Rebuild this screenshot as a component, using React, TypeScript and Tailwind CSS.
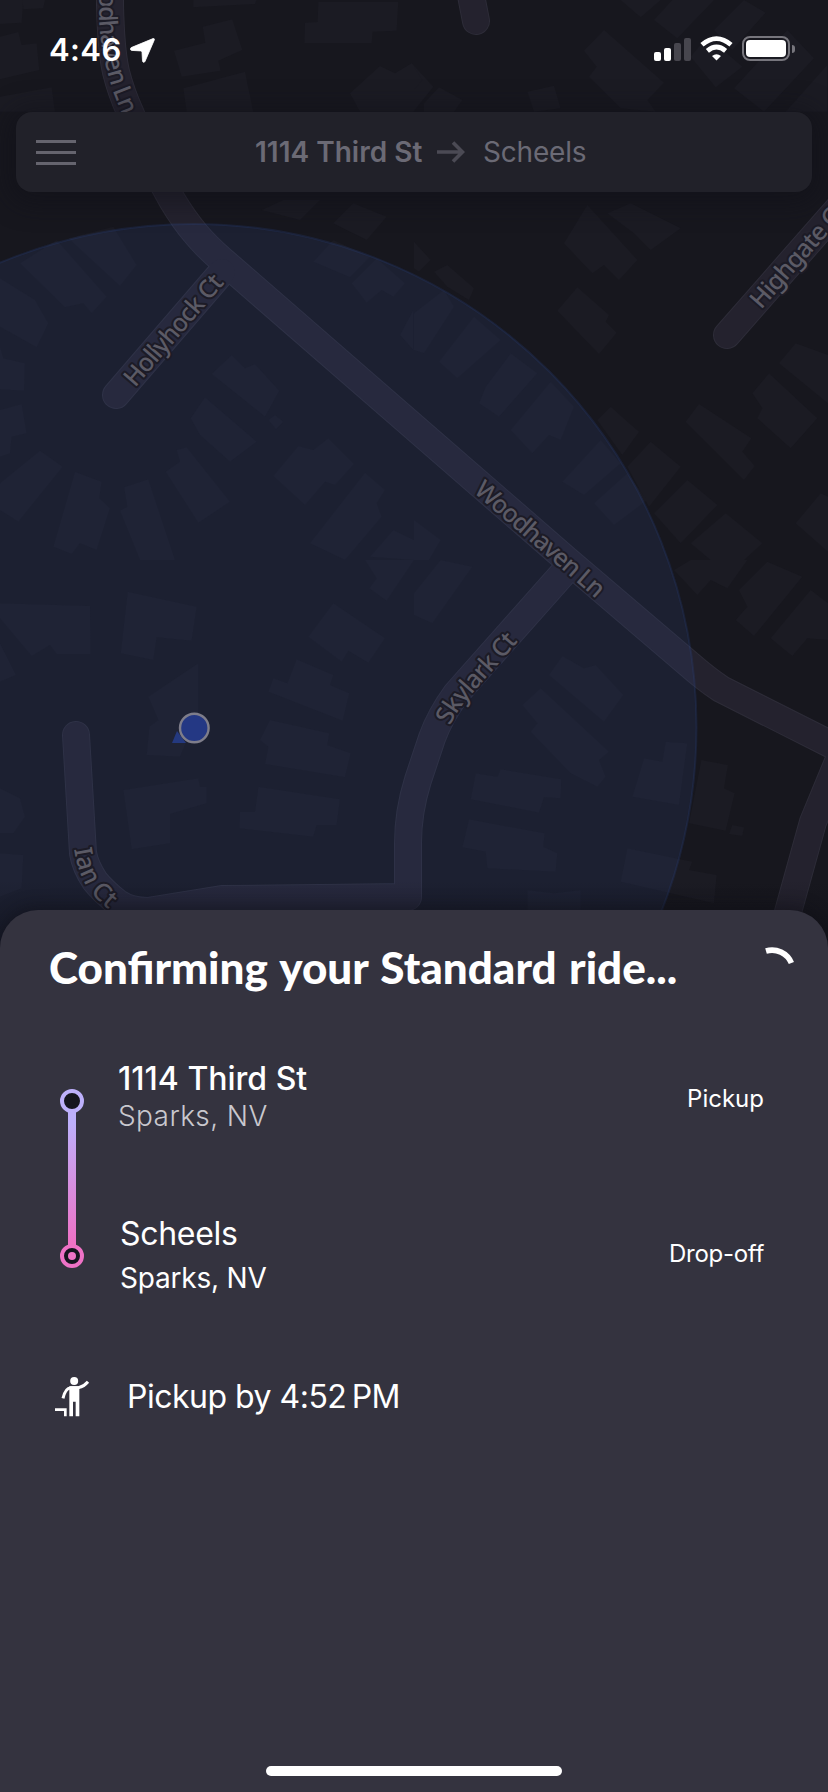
import React from "react";

const ROADS = [
  "M110 -20 L110 5 Q111 50 116 72 Q121 92 130 112 L150 160 L172 200 Q184 220 196 234 Q206 246 222 260 L414 427 L567 560 L690 665 Q706 679 721 689 L828 743 L860 759",
  "M116 395 L222 272",
  "M727 335 L828 220 L860 184",
  "M468 -20 L476 21",
  "M566 570 L456 694 Q440 716 432 738 L418 780 Q408 812 408 843 L408 897 L222 899 L148 911 Q130 911 118 903 Q103 891 95 881 Q85 866 83 853 L76 735",
  "M842 752 L813 822 L788 912 L780 945",
];

type Block = { origin: [number, number]; shapes: string[] };

const BUILDINGS: Block[] = [
  {
    origin: [0, 0],
    shapes: [
      "0,0 70,0 65,68 0,72",
      "68,0 135,0 130,25 70,28",
      "0,110 55,96 65,135 110,130 118,210 0,238",
      "0,290 155,262 165,335 0,335",
      "580,0 770,0 765,12 580,22",
      "955,5 1195,5 1190,92 1118,95 1115,130 913,130 915,68 953,66",
      "522,152 616,128 608,80 697,58 727,150 655,182 662,212 545,230",
      "550,265 735,215 760,335 560,335",
      "1050,280 1140,198 1185,220 1235,190 1300,260 1240,335 1080,335",
    ],
  },
  {
    origin: [414, 0],
    shapes: [
      "620,0 740,0 680,52",
      "720,60 775,0 900,0 790,115",
      "900,90 990,0 1055,38 955,150",
      "510,152 570,90 750,248 700,300 725,335 620,325 525,230 548,200",
      "830,170 880,110 985,200 905,262",
      "960,265 1120,90 1200,175 1050,335",
      "1115,335 1240,195 1240,335",
      "340,275 420,257 440,325 360,335",
      "30,310 75,262 145,300 120,335 30,335",
      "0,200 25,240 0,270",
    ],
  },
  {
    origin: [0, 200],
    shapes: [
      "60,190 170,120 320,290 275,340 250,310 195,322",
      "205,115 340,80 410,195 360,258",
      "0,235 105,300 145,370 110,442 0,380",
      "0,440 10,475 75,490 72,572 0,568",
      "0,630 65,612 80,700 35,710 30,760 0,770",
      "0,850 120,752 188,800 55,965 0,930",
      "225,815 305,845 298,895 330,925 290,1050 240,1030 215,1062 160,1040",
      "372,862 445,838 525,1080 420,1080 360,932 382,920",
      "635,522 695,465 735,505 765,492 838,572 795,650",
      "572,655 615,592 770,725 690,785 600,705",
      "805,660 825,645 850,665 828,688",
      "497,815 540,785 530,750 560,742 690,905 595,968",
      "820,828 895,738 940,750 985,715 1062,792 1005,855 975,845 915,915",
      "930,1030 1095,818 1155,870 1130,910 1145,950 1035,1080",
      "940,185 1000,120 1110,170 1050,232",
      "1055,250 1130,175 1215,250 1180,290 1145,270 1100,308",
      "1200,405 1240,330 1240,450",
      "785,30 850,0 960,0 900,60",
      "1000,70 1060,10 1160,50 1100,120",
      "1110,1070 1180,990 1242,1020 1242,1080",
    ],
  },
  {
    origin: [414, 200],
    shapes: [
      "450,130 520,15 670,180 615,240 570,195 535,220",
      "580,40 650,10 800,85 710,150 660,100",
      "0,125 50,180 15,215 0,205",
      "60,215 100,195 180,265 165,300 100,260",
      "430,332 490,262 585,345 575,365 608,398 555,462",
      "75,485 180,350 260,420 130,535",
      "195,610 215,560 290,460 370,520 255,650",
      "290,690 410,545 480,620 440,720 405,705 355,760",
      "550,660 590,620 640,665 675,695 625,765",
      "640,800 710,725 800,800 705,920",
      "445,845 560,720 620,790 510,885",
      "540,910 640,820 700,900 600,975",
      "720,940 820,840 910,915 800,1030",
      "815,665 855,612 1012,715 985,755 1022,798 990,840",
      "1015,580 1065,520 1210,655 1130,745 1030,655 1045,625",
      "1095,490 1145,430 1242,465 1242,610",
      "830,1030 935,940 1045,1030 990,1080 890,1080",
      "1145,970 1220,880 1242,890 1242,1055",
      "0,340 90,270 120,320 30,460 0,450",
      "0,960 80,1020 45,1080 0,1080",
    ],
  },
  {
    origin: [0, 560],
    shapes: [
      "0,130 270,138 272,282 170,282 150,255 95,288 0,175",
      "0,250 48,345 0,365",
      "383,95 590,140 575,242 470,232 460,300 362,280",
      "445,410 595,310 595,460 540,590 440,585 448,500 475,480",
      "1000,130 1155,235 1105,308 1045,272 1025,305 925,230",
      "890,298 1000,345 990,375 1048,400 1028,482 805,395 820,355 862,370",
      "810,480 988,520 982,555 1052,580 1035,652 795,612 805,560 780,540",
      "775,680 1020,718 1010,795 950,795 940,830 718,805 720,755 765,755",
      "370,690 595,655 600,680 620,680 620,730 510,762 510,850 395,868",
      "0,685 60,715 75,770 40,820 0,820",
      "0,880 70,885 65,985 0,1010",
      "1095,0 1242,0 1160,122 1108,85 1130,55",
    ],
  },
  {
    origin: [414, 560],
    shapes: [
      "0,100 80,0 175,20 55,190 0,165",
      "405,345 445,288 510,325 545,315 628,405 570,485",
      "325,435 380,385 585,575 555,600 575,650 550,680 470,640 350,515 370,490",
      "185,640 250,650 260,628 442,658 440,715 390,712 375,758 170,718",
      "165,778 392,820 388,860 430,880 425,935 220,925 215,875 145,862",
      "690,595 745,605 755,545 820,550 795,735 655,710",
      "862,600 942,615 930,685 962,700 935,812 825,790",
      "955,795 990,802 985,828 945,822",
      "640,865 835,905 825,930 908,945 900,1030 620,965",
      "780,30 830,0 1000,0 940,85 890,60 850,105",
      "975,90 1060,5 1165,50 1020,228 965,180 1000,140",
      "1070,235 1190,90 1242,130 1242,240 1180,235 1135,288",
      "340,990 420,1000 500,990 500,1050 340,1050",
    ],
  },
];

function MapCanvas() {
  return (
    <svg className="absolute inset-0" width="828" height="960" viewBox="0 0 828 960" aria-hidden="true">
      <defs>
        <path id="lbl-woodhaven-top" d="M99 -43 L99 20 Q101 50 106 66 Q110 84 116 99 L130 134" />
        <path id="lbl-ian" d="M74 849 Q77 871 88 889 Q98 903 126 922" />
        <path id="lbl-skylark" d="M450 726 Q458 709 470 696 L530 628" />
        <linearGradient id="sheet-shade" x1="0" x2="0" y1="0" y2="1">
          <stop offset="0" stopColor="#0d0d14" stopOpacity="0" />
          <stop offset="1" stopColor="#0d0d14" stopOpacity="0.5" />
        </linearGradient>
      </defs>
      <rect width="828" height="960" fill="#17171e" />
      {BUILDINGS.map((b, i) => (
        <g key={i} transform={`translate(${b.origin[0]} ${b.origin[1]}) scale(0.33333)`} fill="#1b1b23">
          {b.shapes.map((s) => (
            <polygon key={s} points={s} />
          ))}
        </g>
      ))}
      <g fill="none" strokeLinecap="round" strokeLinejoin="round">
        {ROADS.map((d) => (
          <path key={d} d={d} stroke="#2d2c38" strokeWidth="28" />
        ))}
        {ROADS.map((d) => (
          <path key={d} d={d} stroke="#24222e" strokeWidth="26" />
        ))}
      </g>
      <circle cx="193.5" cy="727" r="503" fill="#3a5198" fillOpacity="0.16" stroke="#2f4a94" strokeOpacity="0.2" strokeWidth="2" />
      <g
        fill="#5b5a65"
        stroke="#1c1b26"
        strokeWidth="4"
        strokeLinejoin="round"
        paintOrder="stroke"
        fontFamily="'Noto Sans', sans-serif"
        fontWeight="500"
        fontSize="25"
      >
        <text textLength="162">
          <textPath href="#lbl-woodhaven-top">Woodhaven Ln</textPath>
        </text>
        <text transform="translate(135 388) rotate(-49.5)" textLength="138">Hollyhock Ct</text>
        <text transform="translate(473 492) rotate(41)" textLength="163">Woodhaven Ln</text>
        <text textLength="109">
          <textPath href="#lbl-skylark">Skylark Ct</textPath>
        </text>
        <text transform="translate(761 310) rotate(-48.7)" textLength="132">Highgate Ct</text>
        <text textLength="72">
          <textPath href="#lbl-ian">Ian Ct</textPath>
        </text>
      </g>
      <path d="M172 743 L177 731 L186 743 Z" fill="#24397f" />
      <circle cx="194.3" cy="728" r="14.3" fill="#243884" stroke="#7e7d8a" strokeWidth="2.4" />
      <rect y="880" width="828" height="80" fill="url(#sheet-shade)" />
    </svg>
  );
}

function StatusBar() {
  return (
    <div className="flex h-[112px] items-start pl-[49px] pr-[33px] pt-[34px]">
      <span className="w-[73px] whitespace-nowrap font-['Inter',sans-serif] text-[31px] font-semibold leading-[32px] tracking-[0.4px] text-white">
        4:46
      </span>
      <svg className="ml-[8px] mt-[4px]" width="25" height="25" viewBox="0 0 25 25" fill="#fff" stroke="#fff" strokeWidth="0.8">
        <path d="M23 0.6 L1.2 9.6 C0 10.3 0.2 12.2 1.6 12.4 L10.6 12.9 C11.5 13 11.9 13.4 12 14.2 L12.5 22.8 C12.6 24.5 14.2 24.8 15 23.4 L24.2 2.2 C24.7 1 24.2 0.2 23 0.6 Z" />
      </svg>
      <div className="ml-auto flex items-end">
        <div className="mt-[4px] flex h-[23px] items-end gap-[3px]">
          <div className="h-[9px] w-[7px] rounded-[2px] bg-white" />
          <div className="h-[13px] w-[7px] rounded-[2px] bg-white" />
          <div className="h-[18px] w-[7px] rounded-[2px] bg-[#47464e]" />
          <div className="h-[23px] w-[7px] rounded-[2px] bg-[#47464e]" />
        </div>
        <svg className="ml-[9px]" width="33" height="25" viewBox="0 0 33 25" fill="none" stroke="#fff">
          <path d="M2 8.8 Q9 2.6 16.5 2.6 T31 8.8" strokeWidth="4.8" />
          <path d="M7.4 14.8 Q12 11 16.5 11 T25.6 14.8" strokeWidth="4.8" />
          <path d="M12 20 Q16.5 16.4 21 20 L16.5 24.4 Z" fill="#fff" stroke="none" />
        </svg>
        <div className="ml-[9px] flex items-center">
          <div className="h-[25px] w-[48px] rounded-[8px] border-2 border-[#77767d] p-[2px]">
            <div className="h-full w-full rounded-[4px] bg-white" />
          </div>
          <div className="ml-[2px] h-[8px] w-[3px] rounded-r-full bg-[#77767d]" />
        </div>
      </div>
    </div>
  );
}

function TripBar() {
  return (
    <div className="mx-[16px] flex h-[80px] items-center rounded-[16px] bg-[#212129] pl-[20px] shadow-[0_4px_24px_8px_rgba(16,15,24,0.5)]">
      <div className="flex w-[40px] flex-col gap-[8px]">
        <div className="h-[3px] bg-[#65646e]" />
        <div className="h-[3px] bg-[#65646e]" />
        <div className="h-[3px] bg-[#65646e]" />
      </div>
      <div className="ml-[179px] flex items-center font-['Inter',sans-serif] text-[28px] leading-[36px] text-[#6b6a75]">
        <span className="w-[167px] whitespace-nowrap font-semibold">1114 Third St</span>
        <svg className="ml-[15px]" width="28" height="22" viewBox="0 0 28 22" fill="none" stroke="#4b4a54" strokeWidth="3.6">
          <path d="M0 11 H26 M16 1.5 L25.5 11 L16 20.5" />
        </svg>
        <span className="ml-[18px] tracking-[-0.2px]">Scheels</span>
      </div>
    </div>
  );
}

function RouteLine() {
  return (
    <svg className="mt-[31px]" width="24" height="180" viewBox="0 0 24 180">
      <defs>
        <linearGradient id="route" x1="0" x2="0" y1="0" y2="1">
          <stop offset="0.1" stopColor="#bdb0fb" />
          <stop offset="0.95" stopColor="#ee72c6" />
        </linearGradient>
      </defs>
      <rect x="8" y="20" width="8" height="140" fill="url(#route)" />
      <circle cx="12" cy="12" r="10" fill="#15151f" stroke="#bdb0fb" strokeWidth="4" />
      <circle cx="12" cy="167" r="10" fill="#15151f" stroke="#ee72c6" strokeWidth="4" />
      <circle cx="12" cy="167" r="4" fill="#ee72c6" />
    </svg>
  );
}

function Hailing() {
  return (
    <svg width="36" height="41" viewBox="162 712 108 123" fill="none" stroke="#fff">
      <circle cx="222.5" cy="727" r="12" fill="#fff" stroke="none" />
      <path d="M189 779 Q196 748 212 747 L236 747 Q252 743 264 729" strokeWidth="9" />
      <path d="M208 743 H238 V833 H227 V789 H219 V833 H208 Z" fill="#fff" stroke="none" />
      <path d="M165 813 H196 V833" strokeWidth="8" />
    </svg>
  );
}

function Sheet() {
  return (
    <section className="flex flex-1 flex-col rounded-t-[38px] bg-[#34333f] font-['Inter',sans-serif] text-white shadow-[0_-4px_16px_rgba(13,13,20,0.45)]">
      <div className="flex h-[84px] items-start pl-[49px] pr-[32px] pt-[31px]">
        <h1 className="whitespace-nowrap font-['Lato',sans-serif] text-[44px] font-black leading-[53px] [word-spacing:2px]">
          Confirming your Standard ride...
        </h1>
        <svg className="ml-auto mt-[5px]" width="48" height="48" viewBox="0 0 48 48" fill="none">
          <path d="M18 5 A21 21 0 0 1 43.4 17" stroke="#fff" strokeWidth="5.6" />
        </svg>
      </div>

      <div className="mt-[64px] flex items-start pl-[60px] pr-[64px]">
        <RouteLine />
        <div className="ml-[34px] flex flex-1 flex-col pt-px">
          <div className="flex h-[76px] justify-between">
            <div className="whitespace-nowrap">
              <p className="text-[32px] font-medium leading-[40px]">1114 Third St</p>
              <p className="-mt-px text-[28px] font-light leading-[36px] tracking-[0.4px] text-[#c9c8ce]">Sparks, NV</p>
            </div>
            <p className="pt-[24px] text-[24px] leading-[32px]">Pickup</p>
          </div>
          <div className="mt-[79px] flex h-[83px] justify-between">
            <div className="whitespace-nowrap pl-[2px]">
              <p className="text-[32px] leading-[40px] tracking-[-0.3px]">Scheels</p>
              <p className="mt-[6px] text-[28px] leading-[36px] tracking-[-0.2px]">Sparks, NV</p>
            </div>
            <p className="pt-[24px] text-[24px] leading-[32px] tracking-[-0.3px]">Drop-off</p>
          </div>
        </div>
      </div>

      <div className="mt-[79px] flex items-center pl-[54px]">
        <Hailing />
        <p className="ml-[37px] whitespace-nowrap text-[32px] leading-[40px] tracking-[-0.5px]">
          {"Pickup by 4:52\u2009PM"}
        </p>
      </div>

      <div className="mx-auto mb-[16px] mt-auto h-[10px] w-[296px] rounded-full bg-white" />
    </section>
  );
}

export default function App() {
  return (
    <main className="relative h-[1792px] w-[828px] overflow-hidden bg-[#17171e]">
      <MapCanvas />
      <div className="relative flex h-full flex-col">
        <StatusBar />
        <TripBar />
        <div className="h-[718px]" />
        <Sheet />
      </div>
    </main>
  );
}
